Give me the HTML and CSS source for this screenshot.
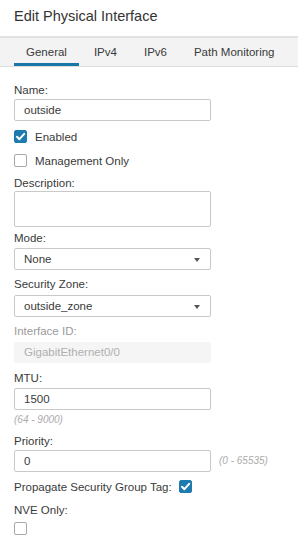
FILE: index.html
```html
<!DOCTYPE html>
<html>
<head>
<meta charset="utf-8">
<link rel="stylesheet" href="styles.css">
</head>
<body>
<div class="dialog">
  <div class="title">Edit Physical Interface</div>
  <div class="tabs">
    <div class="tab active">General</div>
    <div class="tab">IPv4</div>
    <div class="tab">IPv6</div>
    <div class="tab">Path Monitoring</div>
  </div>
  <div class="form">
    <div class="label">Name:</div>
    <div class="input name-input">outside</div>
    <div class="check-row enabled-row"><span class="cb checked"><svg viewBox="0 0 13 13" width="13" height="13"><path d="M3 6.8 L5.4 9.2 L10.2 3.8" fill="none" stroke="#fff" stroke-width="2" stroke-linecap="round" stroke-linejoin="round"/></svg></span><span>Enabled</span></div>
    <div class="check-row mgmt-row"><span class="cb"></span><span>Management Only</span></div>
    <div class="label desc-label">Description:</div>
    <div class="input textarea"></div>
    <div class="label mode-label">Mode:</div>
    <div class="input select"><span>None</span><span class="arrow"></span></div>
    <div class="label zone-label">Security Zone:</div>
    <div class="input select"><span>outside_zone</span><span class="arrow"></span></div>
    <div class="label disabled-label">Interface ID:</div>
    <div class="input disabled">GigabitEthernet0/0</div>
    <div class="label mtu-label">MTU:</div>
    <div class="input mtu-input">1500</div>
    <div class="hint">(64 - 9000)</div>
    <div class="label prio-label">Priority:</div>
    <div class="prio-row">
      <div class="input">0</div>
      <div class="hint inline">(0 - 65535)</div>
    </div>
    <div class="check-row sgt-row"><span>Propagate Security Group Tag:</span><span class="cb checked"><svg viewBox="0 0 13 13" width="13" height="13"><path d="M3 6.8 L5.4 9.2 L10.2 3.8" fill="none" stroke="#fff" stroke-width="2" stroke-linecap="round" stroke-linejoin="round"/></svg></span></div>
    <div class="label nve-label">NVE Only:</div>
    <div class="nve-box"><span class="cb"></span></div>
  </div>
</div>
</body>
</html>
```
FILE: styles.css
```css
html, body {
  margin: 0;
  padding: 0;
  background: #fff;
}
body {
  font-family: "Liberation Sans", Arial, sans-serif;
  font-size: 11.5px;
  color: #3a3a3a;
  width: 298px;
  height: 540px;
  overflow: hidden;
}
.title {
  font-size: 14.5px;
  color: #333;
  padding: 7px 0 0 14px;
  height: 36px;
  line-height: 18px;
  box-sizing: border-box;
}
.tabs {
  display: flex;
  gap: 3px;
  background: #f3f3f3;
  border-top: 2px solid #e2e2e2;
  border-bottom: 1px solid #dcdcdc;
  height: 28px;
  padding-left: 14px;
}
.tab {
  padding: 0 12px;
  line-height: 28px;
  font-size: 11.5px;
  color: #3a3a3a;
  box-sizing: border-box;
  height: 28px;
}
.tab.active {
  border-bottom: 3px solid #1b77a8;
  line-height: 28px;
}
.form {
  padding: 16px 0 0 14px;
}
.label {
  line-height: 14px;
  height: 14px;
}
.input {
  width: 197px;
  height: 22px;
  box-sizing: border-box;
  border: 1px solid #c9c9c9;
  border-radius: 2px;
  padding-left: 9px;
  line-height: 20px;
  margin-top: 2px;
}
.enabled-row { margin-top: 9px; }
.mgmt-row { margin-top: 11px; }
.desc-label { margin-top: 9px; }
.textarea { height: 36px; margin-top: 1px; }
.mode-label { margin-top: 4px; }
.select {
  display: flex;
  justify-content: space-between;
  align-items: center;
  padding-right: 10px;
  margin-top: 3px;
}
.arrow {
  width: 0;
  height: 0;
  border-left: 3.5px solid transparent;
  border-right: 3.5px solid transparent;
  border-top: 4.5px solid #555;
  margin-top: 2px;
}
.zone-label { margin-top: 7px; }
.zone-label + .select { margin-top: 4px; }
.disabled-label { margin-top: 7px; color: #9a9a9a; }
.disabled {
  border: none;
  background: #f5f5f5;
  color: #b0b0b0;
  height: 21px;
  line-height: 21px;
  padding-left: 10px;
  margin-top: 4px;
}
.mtu-label { margin-top: 8px; }
.mtu-input { margin-top: 3px; }
.hint {
  font-style: italic;
  font-size: 10px;
  color: #ababab;
  line-height: 14px;
  margin-top: 3px;
}
.prio-label { margin-top: 7px; }
.prio-row {
  display: flex;
  align-items: center;
  gap: 8px;
  margin-top: 2px;
}
.prio-row .input { margin-top: 0; }
.hint.inline { margin-top: 0; }
.check-row {
  display: flex;
  align-items: center;
  gap: 8px;
  height: 13px;
}
.sgt-row { margin-top: 8px; gap: 7px; }
.cb {
  width: 13px;
  height: 13px;
  box-sizing: border-box;
  border: 1px solid #a8a8a8;
  border-radius: 2px;
  background: #fff;
  display: inline-block;
  flex: none;
}
.cb.checked {
  background: #1e7bb0;
  border-color: #1e7bb0;
  position: relative;
}
.cb.checked svg {
  position: absolute;
  left: -1px;
  top: -1px;
}
.nve-label { margin-top: 10px; }
.nve-box { margin-top: 5px; height: 13px; }
```
